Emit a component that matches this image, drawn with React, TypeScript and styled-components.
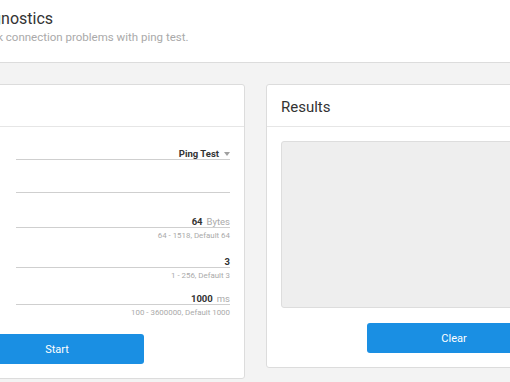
import React from "react";
import styled, { createGlobalStyle } from "styled-components";

const GlobalStyle = createGlobalStyle`
  html, body {
    margin: 0;
    padding: 0;
    background: #f3f3f3;
    font-family: Roboto, "Liberation Sans", Arial, sans-serif;
    overflow: hidden;
  }
`;

const Page = styled.div`
  margin-left: -131px;
  width: 800px;
`;

const Header = styled.header`
  background: #fff;
  border-bottom: 1px solid #dcdcdc;
  padding: 9px 0 18px 100px;
`;

const Title = styled.h1`
  margin: 0;
  font-size: 16px;
  font-weight: 400;
  line-height: 20px;
  color: #333;
`;

const Subtitle = styled.p`
  margin: 2px 0 0;
  text-indent: -9px;
  font-size: 11.5px;
  line-height: 13px;
  color: #aaa;
`;

const Content = styled.main`
  display: flex;
  align-items: flex-start;
  gap: 21px;
  padding-top: 21px;
`;

const Card = styled.section`
  width: 376px;
  background: #fff;
  border: 1px solid #dcdcdc;
  border-radius: 3px;
  box-sizing: border-box;
`;

const CardHeader = styled.div`
  height: 42px;
  box-sizing: border-box;
  display: flex;
  align-items: center;
  padding: 2px 14px 0;
  border-bottom: 1px solid #e6e6e6;
  font-size: 15px;
  color: #333;
`;

const CardBody = styled.div<{ $top: number }>`
  padding: ${(p) => p.$top}px 14px 14px;
  display: flex;
  flex-direction: column;
`;

const Row = styled.div<{ $gap: number }>`
  display: grid;
  grid-template-columns: 122px 1fr;
  column-gap: 10px;
  margin-top: ${(p) => p.$gap}px;
`;

const Label = styled.label`
  font-size: 12px;
  color: #555;
  line-height: 22px;
`;

const Field = styled.div`
  height: 22px;
  box-sizing: border-box;
  border-bottom: 1px solid #cfcfcf;
  display: flex;
  align-items: flex-end;
  justify-content: flex-end;
  gap: 4px;
  padding-bottom: 0;
  font-size: 9.5px;
  line-height: 11px;
`;

const Value = styled.span`
  font-weight: 700;
  color: #333;
`;

const Unit = styled.span`
  color: #aaa;
`;

const Caret = styled.span`
  width: 0;
  height: 0;
  margin: 0 0 3px 1px;
  border-left: 3.5px solid transparent;
  border-right: 3.5px solid transparent;
  border-top: 4px solid #a0a0a0;
`;

const Hint = styled.div`
  grid-column: 2;
  text-align: right;
  font-size: 7.9px;
  line-height: 11px;
  margin-top: 2px;
  color: #aaa;
`;

const Button = styled.button`
  align-self: center;
  width: 174px;
  height: 30px;
  border: none;
  border-radius: 3px;
  background: #1a8fe3;
  color: #fff;
  font-family: inherit;
  font-size: 11px;
  cursor: pointer;
`;

const StartButton = styled(Button)`
  margin-top: 16px;
`;

const ResultBox = styled.div`
  height: 167px;
  box-sizing: border-box;
  background: #eeeeee;
  border: 1px solid #dddddd;
  border-radius: 3px;
  margin-bottom: 15px;
`;

export default function App() {
  return (
    <>
      <GlobalStyle />
      <Page>
        <Header>
          <Title>Diagnostics</Title>
          <Subtitle>Network connection problems with ping test.</Subtitle>
        </Header>
        <Content>
          <Card>
            <CardHeader>Ping</CardHeader>
            <CardBody $top={11}>
              <Row $gap={0}>
                <Label>Type</Label>
                <Field>
                  <Value>Ping Test</Value>
                  <Caret />
                </Field>
              </Row>
              <Row $gap={11}>
                <Label>Host</Label>
                <Field />
              </Row>
              <Row $gap={13}>
                <Label>Size</Label>
                <Field>
                  <Value>64</Value>
                  <Unit>Bytes</Unit>
                </Field>
                <Hint>64 - 1518, Default 64</Hint>
              </Row>
              <Row $gap={5}>
                <Label>Count</Label>
                <Field>
                  <Value>3</Value>
                </Field>
                <Hint>1 - 256, Default 3</Hint>
              </Row>
              <Row $gap={2}>
                <Label>Timeout</Label>
                <Field>
                  <Value>1000</Value>
                  <Unit>ms</Unit>
                </Field>
                <Hint>100 - 3600000, Default 1000</Hint>
              </Row>
              <StartButton>Start</StartButton>
            </CardBody>
          </Card>
          <Card>
            <CardHeader>Results</CardHeader>
            <CardBody $top={14}>
              <ResultBox />
              <Button>Clear</Button>
            </CardBody>
          </Card>
        </Content>
      </Page>
    </>
  );
}
